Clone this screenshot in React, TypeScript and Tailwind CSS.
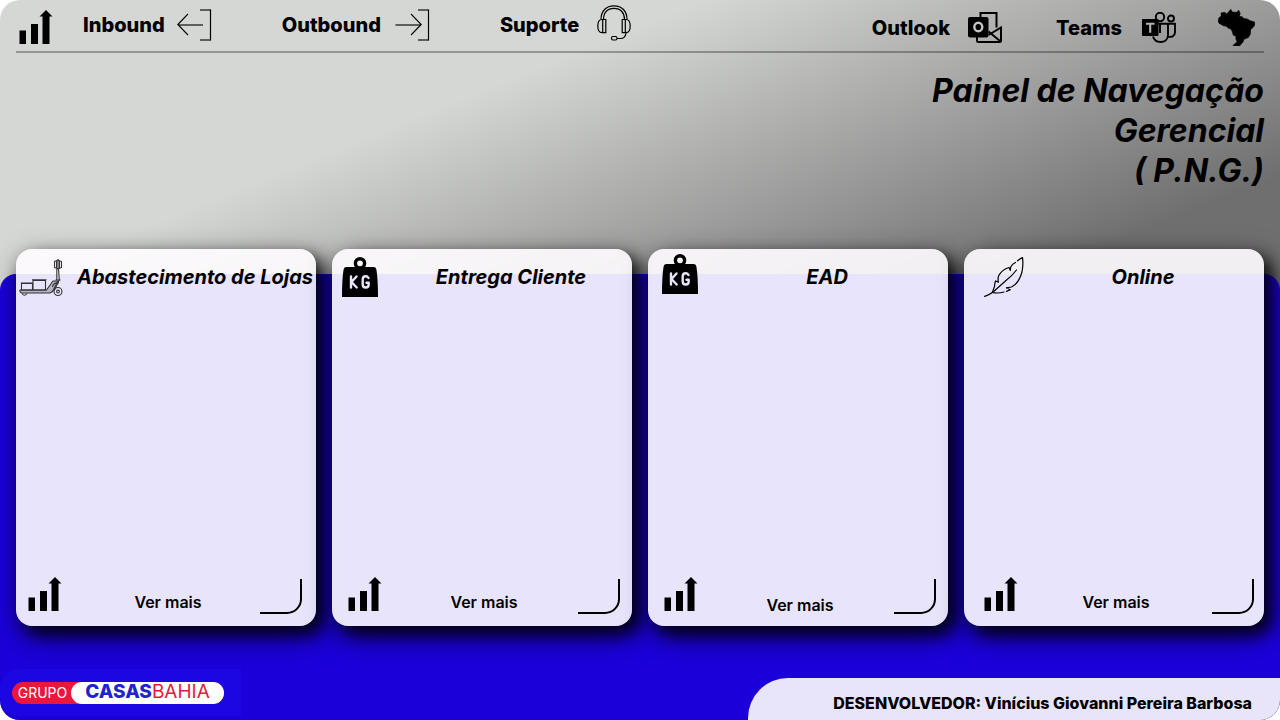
import type { ReactNode } from "react";

function BarsIcon() {
  return (
    <svg className="h-[34px] w-[34px] shrink-0" viewBox="0 0 34 34" aria-hidden="true">
      <path d="M.5 20.500h6.500V34H.5zM12 14h7v20h-7zM23.500 6.500H20.500L27 0l6.500 6.500H30.500V34h-7z" />
    </svg>
  );
}

function InboundIcon() {
  return (
    <svg className="h-8 w-[35px]" viewBox="0 0 35 32" fill="none" stroke="#000" aria-hidden="true">
      <path d="M11 5 .8 15.500 11 26" strokeWidth="1.100" />
      <path d="M1 16h25M23 1h10.500M23 31h10.500" strokeWidth="1.300" opacity=".75" />
      <path d="M33.500.5v31" strokeWidth="1.200" />
    </svg>
  );
}

function OutboundIcon() {
  return (
    <svg className="h-8 w-[35px]" viewBox="0 0 35 32" fill="none" stroke="#000" aria-hidden="true">
      <path d="M16 5l10.200 10.500L16 26" strokeWidth="1.100" />
      <path d="M.5 16H26M23 1h10.500M23 31h10.500" strokeWidth="1.300" opacity=".75" />
      <path d="M33.500.5v31" strokeWidth="1.200" />
    </svg>
  );
}

function HeadsetIcon() {
  return (
    <svg className="h-9 w-[34px]" viewBox="0 0 34 36" fill="none" stroke="#000" strokeWidth="1.200" aria-hidden="true">
      <path d="M4 14.500C4 6 9 .8 17 .8S30 6 30 14.500M6.500 14.500C6.500 7.500 10.500 3.300 17 3.300s10.500 4.200 10.500 11.200" />
      <path d="M8.800 14.500H5C2 14.500.8 17 .8 21S2 27.700 5 27.700h3.800zM5.700 14.500v13.200M25.200 14.500H29c3 0 4.200 2.500 4.200 6.500s-1.200 6.700-4.200 6.700h-3.800zM28.300 14.500v13.200" />
      <path d="M29 28c-.5 4-2.500 5.500-5.500 5.500H20" />
      <rect x="14.500" y="31.500" width="5.500" height="3.500" rx="1.500" />
    </svg>
  );
}

function OutlookIcon() {
  return (
    <svg className="h-[31px] w-[34px]" viewBox="0 0 34 31" fill="none" stroke="#000" strokeWidth="2" aria-hidden="true">
      <path d="M12.500 6V1h16v14.500M9 25v3.500q0 1.500 1.500 1.500h21q1.500 0 1.500-1.500V15.500L20.500 23M20.500 19.500 32 29" />
      <rect x="0" y="5" width="20.500" height="20.500" rx="2" fill="#000" stroke="none" />
      <ellipse cx="10.300" cy="15" rx="4" ry="4.300" fill="none" stroke="#c4c5c3" strokeWidth="2.400" />
    </svg>
  );
}

function TeamsIcon() {
  return (
    <svg className="h-[31px] w-[34px]" viewBox="0 0 34 31" fill="none" stroke="#000" strokeWidth="1.900" aria-hidden="true">
      <circle cx="18" cy="5" r="4.200" />
      <circle cx="29" cy="6.500" r="3" />
      <path d="M16 11.800h10V23c0 4.500-3.200 7-7.500 7-4 0-6.500-2-7.500-5.500M26 11.800h7v8.400c0 3.500-3 5.400-7 4.400M18 12v9" />
      <rect x="0" y="7" width="16.500" height="17" rx="1" fill="#000" stroke="none" />
      <path d="M4 11.700h8.500M8.200 11.700v9" stroke="#b4b5b3" strokeWidth="2.100" />
    </svg>
  );
}

function BrazilIcon() {
  return (
    <svg className="h-[37px] w-[37px]" viewBox="0 0 110 110" aria-hidden="true">
      <path
        d="M38 1l4 8 13 1 7-6 4 10-3 8 9 1 4 5 11 2 9 5 13 4 0 9-5 7-7 6-1 14-6 10-13 5-3 9-7 7-6 8-5 5-8-5-4-4 5-6 8-7-4-8 1-7-9-5-2-9-4-8-10-4-4-5-8-1-6-3-8-5-3-7 3-9 7-5-1-9 10-2 6 4 4-2z"
        stroke="#000"
        strokeWidth="2"
        strokeLinejoin="round"
      />
    </svg>
  );
}

function ScooterIcon() {
  return (
    <svg className="h-[38px] w-11" viewBox="0 0 44 38" fill="none" stroke="#333" strokeWidth="1.100" aria-hidden="true">
      <path d="M1 31h26.500L34 22h5l-5.500 10.500L31 34H2.500Q.5 33 1 31z" fill="#b5b3c2" />
      <path d="M2.500 24.500h11V31h-11zM1.800 24h12.400M14 21.500h12.500V31H14zM13 20.800h14.500M39.500 10l.8 11-5 10.500M37.800 10v11M36.500 21h5" />
      <path d="M35.500 2.500 39 1l3.500 1.500v6L39 10l-3.500-1.500zM37.500 2v7.500M40.500 2v7.500M39 0v10.500" />
      <path d="M33.500 28q1-5 6.500-4" />
      <circle cx="39" cy="32.500" r="4" />
      <circle cx="39" cy="32.500" r="1.400" />
      <path d="M3 34.500q2.500 3.500 5 0" />
    </svg>
  );
}

function WeightIcon() {
  return (
    <svg className="h-10 w-9" viewBox="0 0 36 40" fill="none" aria-hidden="true">
      <circle cx="18" cy="6.300" r="4.600" stroke="#000" strokeWidth="3.400" />
      <path d="M4 10h28q2 0 2.400 2.500Q36 22 36 40H0Q0 22 1.600 12.500 2 10 4 10z" fill="#000" />
      <path
        d="M9 19.500v11M14.500 19.500 9.500 25l5.200 5.500M26.500 21q-1-1.700-2.800-1.700-3 0-3 3.200v5q0 3 3 3t3-3v-1.800h-2.200"
        stroke="#e8e4fa"
        strokeWidth="2.400"
        strokeLinecap="round"
        strokeLinejoin="round"
      />
    </svg>
  );
}

function FeatherIcon() {
  return (
    <svg className="h-10 w-10" viewBox="0 0 40 40" fill="none" stroke="#000" strokeWidth="1.200" strokeLinecap="round" aria-hidden="true">
      <path d="M.6 39.300Q7 37.500 13 31.500L22 23.500Q28 19 32.500 13" />
      <path d="M8.500 35q1.200-3.500 2-5.500.2-3 1-5.500l2.800 1q-.5-3 .2-6Q18 12.500 25 10.500l1.500 3.300Q25.500 8.500 31.500 5.500M33.500 3.800Q37 1 38.500.6q1 6.400-.5 14.400-3.500 12-10.500 15l-5.500.8q2 .2 4 2l-3.500 1.600M20 35q-5 1.600-11 .7" />
    </svg>
  );
}

function CornerIcon() {
  return (
    <svg className="h-9 w-[42px]" viewBox="0 0 42 36" fill="none" stroke="#000" strokeWidth="2" aria-hidden="true">
      <path d="M41 0v20a14 14 0 0 1-14 14H0" />
    </svg>
  );
}

type Card = {
  title: string;
  icon: ReactNode;
  iconPad: string;
  barsPad: string;
  cornerPad: string;
  labelPad: string;
};

const cards: Card[] = [
  { title: "Abastecimento de Lojas", icon: <ScooterIcon />, iconPad: "pl-[3px] pt-2.5", barsPad: "pl-3", cornerPad: "pr-3.5", labelPad: "pt-[15px]" },
  { title: "Entrega Cliente", icon: <WeightIcon />, iconPad: "pl-2.5 pt-2", barsPad: "pl-4", cornerPad: "pr-3", labelPad: "pt-[15px]" },
  { title: "EAD", icon: <WeightIcon />, iconPad: "pl-3.5 pt-[5px]", barsPad: "pl-4", cornerPad: "pr-3", labelPad: "pt-[18px]" },
  { title: "Online", icon: <FeatherIcon />, iconPad: "pl-5 pt-2", barsPad: "pl-5", cornerPad: "pr-2.5", labelPad: "pt-[15px]" },
];

function PanelCard({ card }: { card: Card }) {
  return (
    <article className="flex min-h-[377px] flex-col justify-between rounded-2xl bg-[#fffdff]/90 shadow-[8px_8px_16px_rgba(0,0,0,0.8),4px_10px_28px_rgba(0,0,0,0.6)]">
      <header className="flex h-14">
        <div className={`w-[58px] shrink-0 ${card.iconPad}`}>
          <div className="w-max">{card.icon}</div>
        </div>
        <h2 className="flex-1 self-center text-center text-xl font-bold whitespace-nowrap italic">{card.title}</h2>
      </header>
      <a href="#" className="flex h-[49px]">
        <span className={`w-[60px] shrink-0 ${card.barsPad}`}>
          <BarsIcon />
        </span>
        <span className={`flex-1 text-center text-base leading-5 font-semibold ${card.labelPad}`}>Ver mais</span>
        <span className={`flex w-14 shrink-0 justify-end pt-0.5 ${card.cornerPad}`}>
          <CornerIcon />
        </span>
      </a>
    </article>
  );
}

export default function App() {
  return (
    <div className="flex min-h-screen flex-col overflow-hidden rounded-[20px] bg-[linear-gradient(158deg,#d5d7d4_23%,#6f6f6f_56%)] font-['Inter',sans-serif] text-black">
      <nav className="mx-4 flex h-[53px] justify-between border-b-2 border-black/30 pr-[9px] pl-[3px]">
        <div className="flex h-[50px] items-center text-xl font-extrabold">
          <span className="mr-[30px] pt-1">
            <BarsIcon />
          </span>
          <a href="#" className="mr-[70px] flex items-center gap-3">
            Inbound
            <InboundIcon />
          </a>
          <a href="#" className="mr-[70px] flex items-center gap-3.5">
            Outbound
            <OutboundIcon />
          </a>
          <a href="#" className="flex items-center gap-[18px]">
            Suporte
            <span className="pb-1">
              <HeadsetIcon />
            </span>
          </a>
        </div>
        <div className="flex items-center pt-1 text-xl font-extrabold">
          <a href="#" className="mr-[54px] flex items-center gap-[18px]">
            Outlook
            <OutlookIcon />
          </a>
          <a href="#" className="mr-[42px] flex items-center gap-5">
            Teams
            <TeamsIcon />
          </a>
          <BrazilIcon />
        </div>
      </nav>

      <h1 className="px-4 pt-[18px] pb-[83px] text-right text-[32px] leading-10 font-bold italic">
        Painel de Navegação
        <br />
        Gerencial
        <br />( P.N.G.)
      </h1>

      <main className="flex flex-1 flex-col rounded-t-2xl bg-[#1c00da]">
        <section className="-mt-[25px] grid grid-cols-4 gap-4 px-4">
          {cards.map((card) => (
            <PanelCard key={card.title} card={card} />
          ))}
        </section>

        <footer className="mt-auto flex items-end justify-between">
          <div className="mb-1 flex h-[47px] w-[241px] items-center rounded-l-[20px] bg-[#1c06e2] pl-3">
            <div className="flex h-[22px] w-[212px] items-center rounded-full bg-[#e8173b]">
              <span className="flex-1 pl-0.5 text-center text-sm text-white">GRUPO</span>
              <span className="flex h-full w-[153px] items-center justify-center rounded-full bg-white text-[19px]">
                <b className="font-extrabold text-[#1f24cf]">CASAS</b>
                <span className="text-[#e8173b]">BAHIA</span>
              </span>
            </div>
          </div>
          <p className="h-[42px] w-[532px] rounded-tl-[40px] bg-[#e8e4fa] pt-[15px] pr-7 text-right text-base leading-5 font-extrabold">
            DESENVOLVEDOR: Vinícius Giovanni Pereira Barbosa
          </p>
        </footer>
      </main>
    </div>
  );
}
